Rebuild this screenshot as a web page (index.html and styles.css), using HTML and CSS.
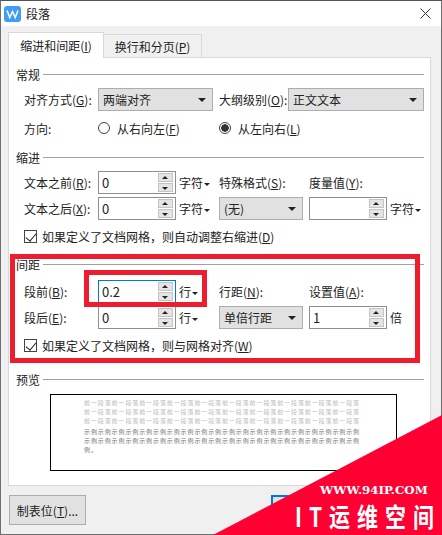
FILE: index.html
```html
<!DOCTYPE html>
<html lang="zh-CN">
<head>
    <meta charset="UTF-8">
    <meta name="viewport" content="width=device-width, initial-scale=1.0">
    <title>段落</title>
    <link rel="stylesheet" href="styles.css">
</head>
<body>
    <div class="window">
        <div class="titlebar">
            <svg class="app-icon" width="17" height="16" viewBox="0 0 17 16">
                <rect width="17" height="16" rx="3" fill="#3f9df3"/>
                <path d="M3 4.5 L5.8 11.5 L8.5 5.5 L11.2 11.5 L14 4.5" fill="none" stroke="#fff" stroke-width="1.5"/>
            </svg>
            <span class="title">段落</span>
            <svg class="close" width="11" height="11" viewBox="0 0 11 11">
                <path d="M0.5 0.5 L10.5 10.5 M10.5 0.5 L0.5 10.5" stroke="#333" stroke-width="1"/>
            </svg>
        </div>

        <div class="tabs">
            <div class="tab active">缩进和间距(<u>I</u>)</div>
            <div class="tab">换行和分页(<u>P</u>)</div>
        </div>

        <div class="panel">
            <div class="legend first"><span>常规</span></div>
            <div class="row row-a">
                <label class="w-74">对齐方式(<u>G</u>):</label>
                <div class="select w-115">两端对齐</div>
                <label class="w-69 ml-6">大纲级别(<u>O</u>):</label>
                <div class="select w-136">正文文本</div>
            </div>
            <div class="row row-b">
                <label class="w-74">方向:</label>
                <span class="radio"></span>
                <label class="w-102">从右向左(<u>F</u>)</label>
                <span class="radio checked"></span>
                <label>从左向右(<u>L</u>)</label>
            </div>

            <div class="legend second"><span>缩进</span></div>
            <div class="row row-a">
                <label class="w-74">文本之前(<u>R</u>):</label>
                <div class="spin"><span class="val">0</span><span class="arrows"><i class="up"></i><i class="down"></i></span></div>
                <span class="unit w-43">字符<i class="caret"></i></span>
                <label class="w-90">特殊格式(<u>S</u>):</label>
                <label>度量值(<u>Y</u>):</label>
            </div>
            <div class="row row-c">
                <label class="w-74">文本之后(<u>X</u>):</label>
                <div class="spin"><span class="val">0</span><span class="arrows"><i class="up"></i><i class="down"></i></span></div>
                <span class="unit w-43">字符<i class="caret"></i></span>
                <div class="select w-84">(无)</div>
                <div class="spin ml-6"><span class="val"></span><span class="arrows"><i class="up"></i><i class="down"></i></span></div>
                <span class="unit">字符<i class="caret"></i></span>
            </div>
            <div class="row row-check">
                <span class="check"></span>
                <label>如果定义了文档网格，则自动调整右缩进(<u>D</u>)</label>
            </div>

            <div class="legend third"><span>间距</span></div>
            <div class="row row-d">
                <label class="w-74">段前(<u>B</u>):</label>
                <div class="spin focus"><span class="val">0.2</span><span class="arrows"><i class="up"></i><i class="down"></i></span></div>
                <span class="unit w-43">行<i class="caret"></i></span>
                <label class="w-90">行距(<u>N</u>):</label>
                <label>设置值(<u>A</u>):</label>
            </div>
            <div class="row row-c">
                <label class="w-74">段后(<u>E</u>):</label>
                <div class="spin"><span class="val">0</span><span class="arrows"><i class="up"></i><i class="down"></i></span></div>
                <span class="unit w-43">行<i class="caret"></i></span>
                <div class="select w-84">单倍行距</div>
                <div class="spin ml-6"><span class="val">1</span><span class="arrows"><i class="up"></i><i class="down"></i></span></div>
                <span class="unit">倍</span>
            </div>
            <div class="row row-check">
                <span class="check"></span>
                <label>如果定义了文档网格，则与网格对齐(<u>W</u>)</label>
            </div>

            <div class="legend fourth"><span>预览</span></div>
            <div class="preview">
                <div class="prev-line">前一段落前一段落前一段落前一段落前一段落前一段落前一段落前一段落前一段落前一段落</div>
                <div class="prev-line">前一段落前一段落前一段落前一段落前一段落前一段落前一段落前一段落前一段落前一段落</div>
                <div class="prev-line">前一段落前一段落前一段落前一段落前一段落前一段落前一段落前一段落前一段落前一段落</div>
                <div class="sample-line first-sample">示例示例示例示例示例示例示例示例示例示例示例示例示例示例示例示例示例示例示例示例</div>
                <div class="sample-line">示例示例示例示例示例示例示例示例示例示例示例示例示例示例示例示例示例示例示例示例</div>
                <div class="sample-line">例。</div>
            </div>
        </div>

        <div class="footer">
            <button class="btn">制表位(<u>T</u>)...</button>
            <button class="btn primary"></button>
        </div>
    </div>

    <!-- watermark sits over the corner of the dialog -->
    <div class="mark-corner"></div>
    <div class="mark-url">WWW.94IP.COM</div>
    <div class="mark-name">IT运维空间</div>

    <div class="red-box outer"></div>
    <div class="red-box inner"></div>
</body>
</html>
```

FILE: styles.css
```css
* {
    box-sizing: border-box;
}
html, body {
    margin: 0;
    padding: 0;
}
body {
    width: 442px;
    height: 535px;
    overflow: hidden;
    position: relative;
    font-family: "Noto Sans CJK SC", "Liberation Sans", sans-serif;
    font-size: 12px;
    color: #222;
    background: #f0f0f0;
}
.window {
    width: 442px;
    height: 535px;
    background: #f0f0f0;
    border: 1px solid #6f6f6f;
    border-top-color: #555;
}
.titlebar {
    height: 25px;
    background: #fff;
    display: flex;
    align-items: center;
    padding: 0 10px 0 3px;
}
.app-icon {
    flex: none;
}
.title {
    margin-left: 5px;
    flex: 1;
}

.tabs {
    display: flex;
    align-items: flex-end;
    height: 31px;
    padding-left: 7px;
    position: relative;
    z-index: 1;
}
.tab {
    width: 98px;
    height: 23px;
    background: #f0f0f0;
    border: 1px solid #d9d9d9;
    border-left: none;
    border-bottom: none;
    text-align: center;
    line-height: 23px;
}
.tab.active {
    width: 96px;
    height: 26px;
    background: #fff;
    border-left: 1px solid #d9d9d9;
    line-height: 26px;
    margin-bottom: -1px;
}

.panel {
    margin-left: 7px;
    width: 423px;
    height: 429px;
    background: #fff;
    border: 1px solid #d9d9d9;
    padding: 0 6px 0 7px;
}
.legend {
    display: flex;
    align-items: center;
    height: 16px;
}
.legend::after {
    content: "";
    flex: 1;
    height: 1px;
    background: #a0a0a0;
    margin-left: 3px;
}
.legend.first { margin-top: 8px; }
.legend.second { margin-top: 13px; }
.legend.third { margin-top: 12px; }
.legend.fourth { margin-top: 18px; }

.row {
    display: flex;
    align-items: center;
    margin-left: 8px;
    height: 23px;
    white-space: nowrap;
}
.row-a { margin-top: 6px; }
.row-b { margin-top: 9px; height: 16px; }
.row-c { margin-top: 3px; }
.row-d { margin-top: 8px; }
.row-check { margin-top: 8px; height: 16px; }

.w-74 { width: 74px; }
.w-69 { width: 69px; }
.w-84 { width: 84px; }
.w-90 { width: 90px; }
.w-102 { width: 102px; }
.w-115 { width: 115px; }
.w-136 { width: 136px; }
.w-43 { width: 43px; }
.ml-6 { margin-left: 6px; }

.select {
    height: 23px;
    line-height: 21px;
    padding-left: 4px;
    background: #e1e1e1;
    border: 1px solid #adadad;
    position: relative;
}
.select::after {
    content: "";
    position: absolute;
    right: 6px;
    top: 9px;
    border-left: 4px solid transparent;
    border-right: 4px solid transparent;
    border-top: 4px solid #222;
}
.spin {
    width: 78px;
    height: 23px;
    background: #fff;
    border: 1px solid #8f8f8f;
    display: flex;
    align-items: center;
    padding-left: 3px;
    font-size: 13px;
}
.spin.focus {
    border-color: #0078d7;
}
.val {
    flex: 1;
}
.arrows {
    width: 15px;
    height: 19px;
    margin-right: 2px;
    display: flex;
    flex-direction: column;
    gap: 1px;
}
.arrows i {
    flex: 1;
    background: #e4e4e4;
    border: 1px solid #c4c4c4;
    position: relative;
}
.arrows i::after {
    content: "";
    position: absolute;
    left: 3px;
    border-left: 3px solid transparent;
    border-right: 3px solid transparent;
}
.arrows .up::after {
    top: 2px;
    border-bottom: 3px solid #222;
}
.arrows .down::after {
    top: 3px;
    border-top: 3px solid #222;
}
.unit {
    padding-left: 3px;
}
.caret {
    display: inline-block;
    margin-left: 1px;
    vertical-align: middle;
    border-left: 3px solid transparent;
    border-right: 3px solid transparent;
    border-top: 3px solid #222;
}

.radio {
    width: 12px;
    height: 12px;
    border: 1px solid #444;
    border-radius: 50%;
    margin-right: 7px;
    flex: none;
    background: #fff;
}
.radio.checked {
    background: radial-gradient(circle, #333 0, #333 3.5px, #fff 4px);
}
.check {
    width: 13px;
    height: 13px;
    border: 1px solid #444;
    margin-right: 5px;
    flex: none;
    position: relative;
}
.check::after {
    content: "";
    position: absolute;
    left: 3px;
    top: 0;
    width: 5px;
    height: 9px;
    border-right: 1px solid #222;
    border-bottom: 1px solid #222;
    transform: rotate(40deg);
}

.preview {
    margin: 7px 0 0 34px;
    width: 347px;
    height: 77px;
    border: 1px solid #000;
    background: #fff;
    padding: 3px 0 0 33px;
    font-size: 6px;
    letter-spacing: 0.9px;
    line-height: 9px;
    white-space: nowrap;
    overflow: hidden;
}
.prev-line {
    color: #bbb;
}
.sample-line {
    color: #777;
}
.first-sample {
    margin-top: 2px;
}

.footer {
    height: 48px;
    display: flex;
    align-items: center;
    padding: 0 0 0 8px;
}
.btn {
    width: 77px;
    height: 30px;
    padding: 0;
    font: inherit;
    color: inherit;
    background: #e1e1e1;
    border: 1px solid #adadad;
}
.btn.primary {
    margin-left: 185px;
    border: 2px solid #0078d7;
}

.mark-corner {
    position: absolute;
    left: 213px;
    top: 415px;
    width: 229px;
    height: 120px;
    background: #ff0033;
    clip-path: polygon(100% 0, 100% 100%, 0 100%);
}
.mark-url {
    position: absolute;
    left: 320px;
    top: 482px;
    font-family: "DejaVu Serif", "Liberation Serif", serif;
    font-size: 11.8px;
    font-weight: bold;
    line-height: 16px;
    color: #fff;
    white-space: nowrap;
}
.mark-name {
    position: absolute;
    left: 295px;
    top: 501px;
    font-size: 21px;
    font-weight: bold;
    line-height: 30px;
    letter-spacing: 7px;
    color: #fff;
    white-space: nowrap;
    transform: scaleY(1.25);
}

.red-box {
    position: absolute;
    border: 5px solid #ed1c2e;
}
.red-box.outer {
    left: 10px;
    top: 254px;
    width: 410px;
    height: 109px;
}
.red-box.inner {
    left: 84px;
    top: 270px;
    width: 123px;
    height: 37px;
}
```
